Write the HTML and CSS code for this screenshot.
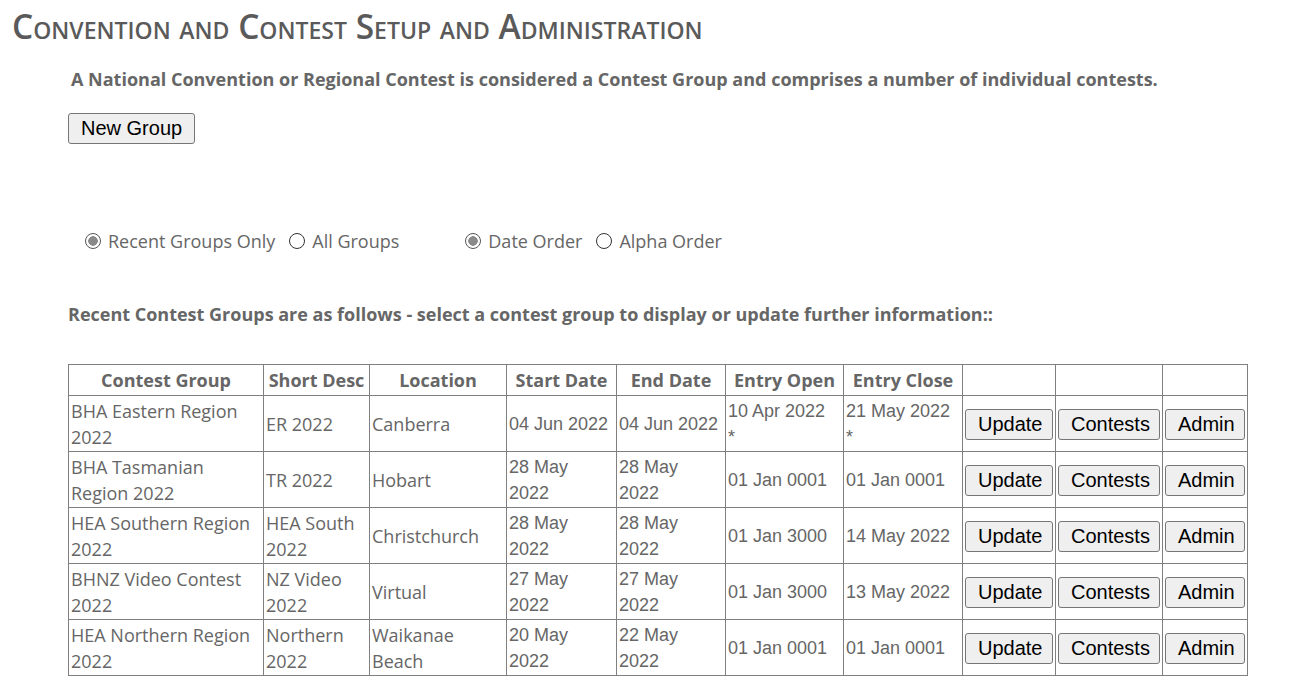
FILE: index.html
```html
<!DOCTYPE html>
<html lang="en">
<head>
  <meta charset="UTF-8" />
  <title>Convention and Contest Setup and Administration</title>
  <link rel="stylesheet" href="styles.css">
</head>
<body>
  <h1 class="page-title">Convention and Contest Setup and Administration</h1>

  <div class="content">
    <p class="intro">A National Convention or Regional Contest is considered a Contest Group and comprises a number of individual contests.</p>

    <button class="btn btn-new">New Group</button>

    <div class="filters">
      <label class="opt"><input type="radio" name="range" checked> Recent Groups Only</label>
      <label class="opt"><input type="radio" name="range"> All Groups</label>
      <span class="filter-gap"></span>
      <label class="opt"><input type="radio" name="order" checked> Date Order</label>
      <label class="opt"><input type="radio" name="order"> Alpha Order</label>
    </div>

    <p class="list-heading">Recent Contest Groups are as follows - select a contest group to display or update further information::</p>

    <table class="groups">
      <colgroup>
        <col class="c-group">
        <col class="c-short">
        <col class="c-loc">
        <col class="c-start">
        <col class="c-end">
        <col class="c-open">
        <col class="c-close">
        <col class="c-upd">
        <col class="c-con">
        <col class="c-adm">
      </colgroup>
      <thead>
        <tr>
          <th>Contest Group</th>
          <th>Short Desc</th>
          <th>Location</th>
          <th>Start Date</th>
          <th>End Date</th>
          <th>Entry Open</th>
          <th>Entry Close</th>
          <th></th>
          <th></th>
          <th></th>
        </tr>
      </thead>
      <tbody>
        <tr>
          <td>BHA Eastern Region 2022</td>
          <td>ER 2022</td>
          <td>Canberra</td>
          <td class="date">04 Jun 2022</td>
          <td class="date">04 Jun 2022</td>
          <td class="date">10 Apr 2022 <span class="flag">*</span></td>
          <td class="date">21 May 2022 <span class="flag">*</span></td>
          <td><button class="btn">Update</button></td>
          <td><button class="btn">Contests</button></td>
          <td><button class="btn">Admin</button></td>
        </tr>
        <tr>
          <td>BHA Tasmanian Region 2022</td>
          <td>TR 2022</td>
          <td>Hobart</td>
          <td class="date">28 May 2022</td>
          <td class="date">28 May 2022</td>
          <td class="date">01 Jan 0001</td>
          <td class="date">01 Jan 0001</td>
          <td><button class="btn">Update</button></td>
          <td><button class="btn">Contests</button></td>
          <td><button class="btn">Admin</button></td>
        </tr>
        <tr>
          <td>HEA Southern Region 2022</td>
          <td>HEA South 2022</td>
          <td>Christchurch</td>
          <td class="date">28 May 2022</td>
          <td class="date">28 May 2022</td>
          <td class="date">01 Jan 3000</td>
          <td class="date">14 May 2022</td>
          <td><button class="btn">Update</button></td>
          <td><button class="btn">Contests</button></td>
          <td><button class="btn">Admin</button></td>
        </tr>
        <tr>
          <td>BHNZ Video Contest 2022</td>
          <td>NZ Video 2022</td>
          <td>Virtual</td>
          <td class="date">27 May 2022</td>
          <td class="date">27 May 2022</td>
          <td class="date">01 Jan 3000</td>
          <td class="date">13 May 2022</td>
          <td><button class="btn">Update</button></td>
          <td><button class="btn">Contests</button></td>
          <td><button class="btn">Admin</button></td>
        </tr>
        <tr>
          <td>HEA Northern Region 2022</td>
          <td>Northern 2022</td>
          <td>Waikanae Beach</td>
          <td class="date">20 May 2022</td>
          <td class="date">22 May 2022</td>
          <td class="date">01 Jan 0001</td>
          <td class="date">01 Jan 0001</td>
          <td><button class="btn">Update</button></td>
          <td><button class="btn">Contests</button></td>
          <td><button class="btn">Admin</button></td>
        </tr>
      </tbody>
    </table>
  </div>
</body>
</html>
```

FILE: styles.css
```css
body {
  margin: 8px;
  font-family: "Open Sans", "Noto Sans", sans-serif;
  font-size: 18px;
  color: #666;
  background: #fff;
}

.page-title {
  margin: 1px 0 0 4px;
  font-size: 33.5px;
  font-weight: 600;
  font-variant: small-caps;
  color: #5a5a5a;
  line-height: 34px;
}

.content {
  margin-left: 60px;
}

.intro {
  margin: 24px 0 0 3px;
  font-weight: bold;
  line-height: 24px;
}

.btn {
  font-family: "Liberation Sans", Arial, sans-serif;
  font-size: 20px;
  color: #000;
  background: #efefef;
  border: 1px solid #767676;
  border-radius: 3px;
  padding: 1px 12px;
  height: 31px;
}

.btn-new {
  margin-top: 22px;
}

.filters {
  display: flex;
  align-items: center;
  margin: 84px 0 0 17px;
  line-height: 26px;
}

.opt {
  display: flex;
  align-items: center;
  margin-right: 14px;
}

.filter-gap {
  width: 52px;
}

.opt input {
  appearance: none;
  width: 16px;
  height: 16px;
  margin: 0 7px 0 0;
  border: 1px solid #333;
  border-radius: 50%;
  background: #fff;
}

.opt input:checked {
  border-color: #555;
  background: radial-gradient(circle, #8a8a8a 0 4.5px, #fff 5px);
}

.list-heading {
  margin: 47px 0 0;
  font-weight: bold;
  line-height: 26px;
}

.groups {
  margin-top: 37px;
  width: 1180px;
  table-layout: fixed;
  border-collapse: collapse;
  border: 1px solid #808080;
}

.c-group { width: 195px; }
.c-short { width: 106px; }
.c-loc   { width: 137px; }
.c-start { width: 110px; }
.c-end   { width: 109px; }
.c-open  { width: 118px; }
.c-close { width: 119px; }
.c-upd   { width: 93px; }
.c-con   { width: 107px; }
.c-adm   { width: 85px; }

.groups th,
.groups td {
  border: 1px solid #808080;
  padding: 2px 2px 1px;
  line-height: 26px;
  vertical-align: middle;
}

.groups th {
  font-weight: bold;
  text-align: center;
  padding: 2px 2px 2px;
}

.groups td {
  text-align: left;
}

.groups td.date {
  font-family: "Liberation Sans", Arial, sans-serif;
  padding-right: 4px;
}

.flag {
  display: block;
}

.groups td .btn {
  width: 100%;
}
```
